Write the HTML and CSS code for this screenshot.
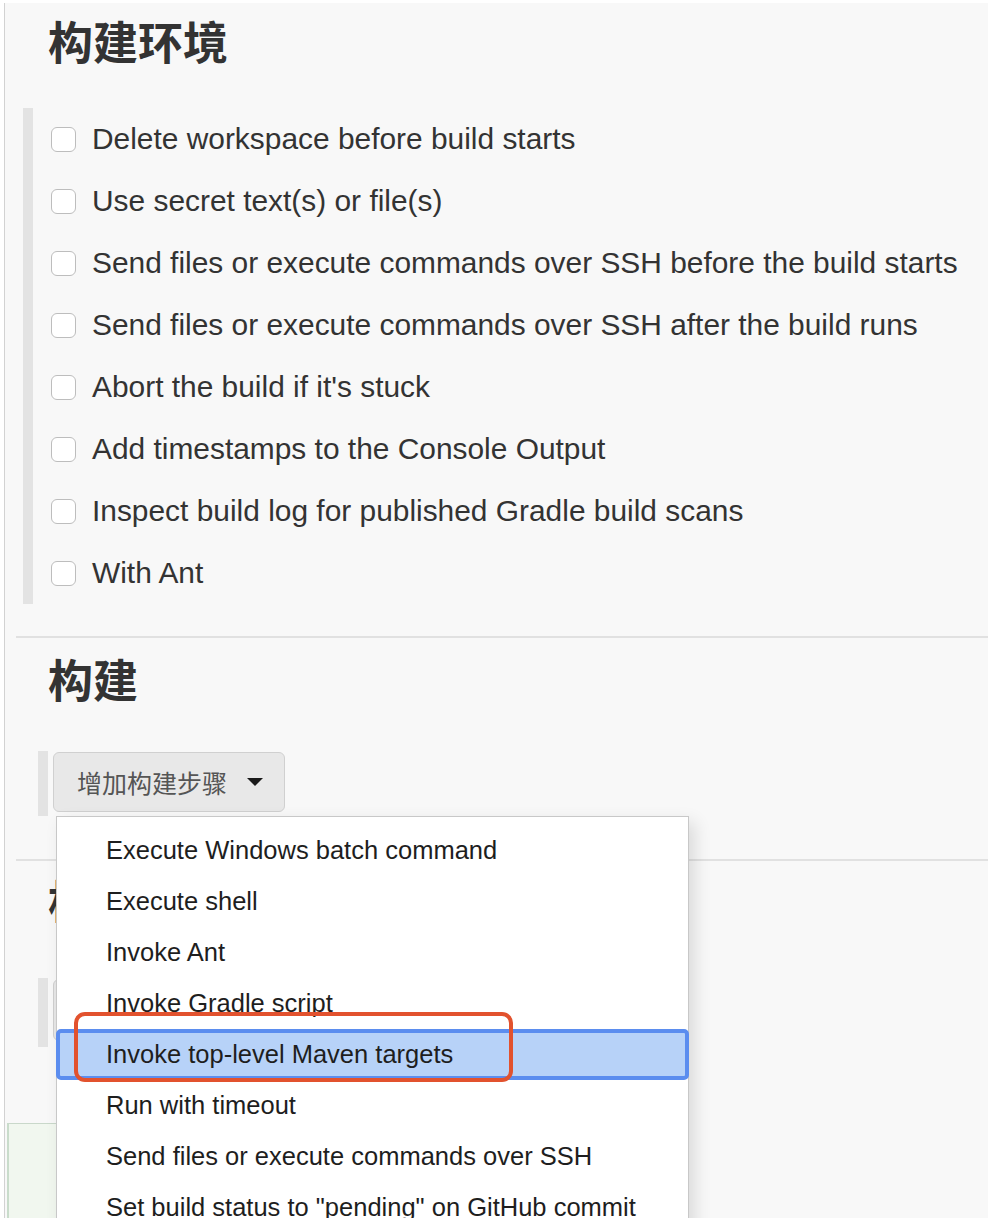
FILE: index.html
```html
<!DOCTYPE html>
<html lang="zh-CN">
<head>
    <meta charset="UTF-8">
    <meta name="viewport" content="width=device-width, initial-scale=1.0">
    <title>构建配置</title>
    <link rel="stylesheet" href="styles.css">
</head>
<body>
    <div class="frame">
        <h2 class="title">构建环境</h2>
        <div class="options">
            <label class="option"><span class="box"></span>Delete workspace before build starts</label>
            <label class="option"><span class="box"></span>Use secret text(s) or file(s)</label>
            <label class="option"><span class="box"></span>Send files or execute commands over SSH before the build starts</label>
            <label class="option"><span class="box"></span>Send files or execute commands over SSH after the build runs</label>
            <label class="option"><span class="box"></span>Abort the build if it's stuck</label>
            <label class="option"><span class="box"></span>Add timestamps to the Console Output</label>
            <label class="option"><span class="box"></span>Inspect build log for published Gradle build scans</label>
            <label class="option"><span class="box"></span>With Ant</label>
        </div>
        <div class="divider"></div>

        <h2 class="title title-build">构建</h2>
        <div class="step-bar">
            <button class="add-step">增加构建步骤<span class="caret"></span></button>
        </div>
        <div class="divider divider-low"></div>

        <h2 class="title title-post">构</h2>
        <div class="step-bar step-bar-post">
            <div class="add-step add-step-empty"></div>
        </div>
        <div class="save-bar"></div>

        <ul class="menu">
            <li>Execute Windows batch command</li>
            <li>Execute shell</li>
            <li>Invoke Ant</li>
            <li>Invoke Gradle script</li>
            <li class="active">Invoke top-level Maven targets</li>
            <li>Run with timeout</li>
            <li>Send files or execute commands over SSH</li>
            <li>Set build status to "pending" on GitHub commit</li>
        </ul>
        <div class="mark"></div>
    </div>
</body>
</html>
```

FILE: styles.css
```css
body {
    margin: 0;
    background: #ffffff;
    font-family: "Liberation Sans", Arial, "Noto Sans CJK SC", sans-serif;
    color: #333333;
}
.frame {
    position: relative;
    margin: 3px 0 0 4px;
    width: 983px;
    height: 1215px;
    border-left: 1px solid #d2d2d2;
    background: #f8f8f8;
    overflow: hidden;
}
.title {
    margin: 13px 0 0 43px;
    font-family: "Noto Sans CJK SC", sans-serif;
    font-size: 45px;
    line-height: 50px;
    font-weight: 700;
    color: #333333;
}
.options {
    margin: 42px 0 0 18px;
    border-left: 10px solid #e3e3e3;
    padding-left: 18px;
}
.option {
    display: flex;
    align-items: center;
    gap: 16px;
    height: 62px;
    font-size: 29.9px;
    color: #333333;
}
.box {
    width: 23px;
    height: 23px;
    border: 1px solid #bdbdbd;
    border-radius: 6px;
    background: #ffffff;
}
.divider {
    margin: 32px 0 0 11px;
    border-top: 2px solid #e1e1e1;
}
.title-build {
    margin-top: 16px;
}
.step-bar {
    display: flex;
    margin: 47px 0 0 33px;
    border-left: 10px solid #e3e3e3;
    padding: 1px 0 4px 5px;
}
.add-step {
    display: flex;
    align-items: center;
    height: 60px;
    padding: 0 21px 0 23px;
    border: 1px solid #d0d0d0;
    border-radius: 6px;
    background: #e8e8e8;
    font-family: "Noto Sans CJK SC", sans-serif;
    font-size: 25px;
    color: #555555;
}
.add-step-empty {
    width: 200px;
    padding: 0;
}
.caret {
    margin-left: 20px;
    border-left: 8px solid transparent;
    border-right: 8px solid transparent;
    border-top: 8px solid #1a1a1a;
}
.divider-low {
    margin-top: 43px;
}
.title-post {
    margin-top: 14px;
}
.step-bar-post {
    margin-top: 53px;
    padding-bottom: 6px;
}
.save-bar {
    margin: 76px 0 0 2px;
    width: 200px;
    height: 100px;
    border-top: 1px solid #c9d8ca;
    border-left: 2px solid #c9dccb;
    background: #f1f7ef;
}
.menu {
    position: absolute;
    left: 51px;
    top: 813px;
    width: 631px;
    height: 460px;
    margin: 0;
    padding: 8px 0 0;
    list-style: none;
    background: #ffffff;
    border: 1px solid #c8c8c8;
    box-shadow: 6px 6px 16px rgba(0, 0, 0, 0.12);
}
.menu li {
    height: 51px;
    line-height: 51px;
    padding-left: 49px;
    font-size: 25.5px;
    color: #1e1e1e;
}
.menu li.active {
    margin: 0 -1px;
    height: 43px;
    line-height: 43px;
    padding-left: 46px;
    border: 4px solid #5b8def;
    border-radius: 5px;
    background: #b7d2f8;
}
.mark {
    position: absolute;
    left: 69px;
    top: 1009px;
    width: 431px;
    height: 62px;
    border: 4px solid #e2522e;
    border-radius: 11px;
}
```
